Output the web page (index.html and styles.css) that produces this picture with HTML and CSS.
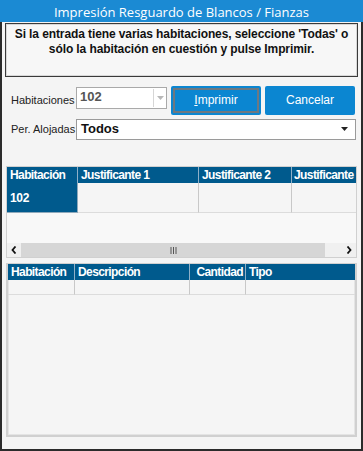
FILE: index.html
```html
<!DOCTYPE html>
<html lang="es">
<head>
    <meta charset="UTF-8">
    <title>Impresión Resguardo de Blancos / Fianzas</title>
    <link rel="stylesheet" href="styles.css">
</head>
<body>
    <div class="ventana">
        <div class="titulo">Impresión Resguardo de Blancos / Fianzas</div>

        <div class="mensaje">
            Si la entrada tiene varias habitaciones, seleccione 'Todas' o<br>
            sólo la habitación en cuestión y pulse Imprimir.
        </div>

        <div class="fila fila-hab">
            <span class="etiqueta">Habitaciones</span>
            <div class="combo combo-hab">
                <span class="valor">102</span>
                <span class="flecha-gris">
                    <svg width="7" height="4" viewBox="0 0 7 4"><path d="M0 0h7L3.5 4z" fill="#b8b8b8"/></svg>
                </span>
            </div>
            <button class="boton boton-foco"><span><u>I</u>mprimir</span></button>
            <button class="boton">Cancelar</button>
        </div>

        <div class="fila fila-per">
            <span class="etiqueta">Per. Alojadas</span>
            <div class="combo combo-per">
                <span class="valor">Todos</span>
                <svg width="7" height="4" viewBox="0 0 7 4"><path d="M0 0h7L3.5 4z" fill="#222"/></svg>
            </div>
        </div>

        <div class="rejilla rejilla-1">
            <div class="cab">
                <div class="c c1">Habitación</div>
                <div class="c c2">Justificante 1</div>
                <div class="c c3">Justificante 2</div>
                <div class="c c4">Justificante</div>
            </div>
            <div class="fila-datos">
                <div class="c c1 sel">102</div>
                <div class="c c2"></div>
                <div class="c c3"></div>
                <div class="c c4"></div>
            </div>
            <div class="vacio"></div>
            <div class="scroll">
                <span class="sc-flecha">
                    <svg width="6" height="8" viewBox="0 0 6 8"><path d="M4.5 0.5L1.5 4l3 3.5" fill="none" stroke="#111" stroke-width="1.8"/></svg>
                </span>
                <span class="sc-barra">
                    <svg width="7" height="7" viewBox="0 0 7 7"><path d="M1 0v7M3.5 0v7M6 0v7" stroke="#555" stroke-width="1"/></svg>
                </span>
                <span class="sc-flecha">
                    <svg width="6" height="8" viewBox="0 0 6 8"><path d="M1.5 0.5L4.5 4l-3 3.5" fill="none" stroke="#111" stroke-width="1.8"/></svg>
                </span>
            </div>
        </div>

        <div class="rejilla rejilla-2">
            <div class="cab">
                <div class="c d1">Habitación</div>
                <div class="c d2">Descripción</div>
                <div class="c d3">Cantidad</div>
                <div class="c d4">Tipo</div>
            </div>
            <div class="fila-datos fila-nueva">
                <div class="c d1"></div>
                <div class="c d2"></div>
                <div class="c d3"></div>
                <div class="c d4"></div>
            </div>
        </div>
    </div>
</body>
</html>
```

FILE: styles.css
```css
body {
    margin: 0;
    font-family: 'Liberation Sans', Arial, sans-serif;
    background: #f4f4f4;
}

.ventana {
    width: 363px;
    height: 451px;
    box-sizing: border-box;
    border: 2px solid #2b2b2b;
    border-top: none;
    background: #f4f4f4;
    display: flex;
    flex-direction: column;
}

.titulo {
    height: 22px;
    margin: 0 -2px;
    background: #1b8ad3;
    color: white;
    font-family: 'Open Sans', 'Noto Sans', sans-serif;
    font-size: 13px;
    line-height: 24px;
    text-align: center;
}

.mensaje {
    margin: 1px 3px 0 3px;
    height: 54px;
    box-sizing: border-box;
    border: 1px solid #3a3a3a;
    box-shadow: inset 0 0 0 1px #d8d8d8;
    background: #f7f7f7;
    font-size: 12px;
    font-weight: bold;
    color: #111;
    text-align: center;
    line-height: 15px;
    padding-top: 3px;
    letter-spacing: -0.1px;
}

.fila {
    display: flex;
    align-items: center;
}

.etiqueta {
    width: 64px;
    margin-left: 9px;
    font-size: 11px;
    color: #222;
    white-space: nowrap;
}

.fila-hab {
    margin-top: 8px;
    height: 30px;
}

.fila-per {
    margin-top: 3px;
    height: 22px;
}

.combo {
    height: 21px;
    box-sizing: border-box;
    background: white;
    border: 1px solid #a9a9a9;
    display: flex;
    align-items: center;
    font-size: 13px;
    font-weight: bold;
    color: #222;
}

.combo-hab {
    width: 91px;
    margin-left: 1px;
    align-self: flex-start;
    margin-top: 2px;
    height: 22px;
    color: #555;
}

.combo-hab .valor {
    flex: 1;
    padding-left: 3px;
    margin-top: -3px;
}

.flecha-gris {
    width: 12px;
    height: 18px;
    border-left: 1px solid #d6d6d6;
    display: flex;
    align-items: center;
    justify-content: center;
}

.combo-per {
    width: 280px;
    margin-left: 1px;
    padding-right: 7px;
    border-color: #9a9a9a;
}

.combo-per .valor {
    flex: 1;
    padding-left: 4px;
    color: #111;
    margin-top: -2px;
}

.boton {
    width: 90px;
    height: 29px;
    margin-left: 4px;
    border: none;
    border-radius: 2px;
    background: #0b86d1;
    color: white;
    font-family: 'Liberation Sans', Arial, sans-serif;
    font-size: 12px;
    padding: 0;
}

.boton-foco {
    padding: 2px;
}

.boton-foco span {
    display: flex;
    align-items: center;
    justify-content: center;
    height: 100%;
    box-sizing: border-box;
    border: 2px solid #6e7880;
}

.rejilla {
    margin: 0 4px;
    border: 1px solid #d0d0d0;
    background: #f5f5f5;
    box-sizing: border-box;
}

.rejilla-1 {
    margin-top: 26px;
    height: 92px;
    display: flex;
    flex-direction: column;
}

.rejilla-2 {
    margin-top: 5px;
    height: 174px;
    border-width: 1px 2px 2px 2px;
    box-shadow: inset 0 0 0 1px #e4e4e4;
}

.cab {
    display: flex;
    background: #005a8d;
    color: white;
    font-size: 12px;
    letter-spacing: -0.6px;
    font-weight: bold;
    height: 16px;
    line-height: 16px;
}

.cab .c {
    border-right: 1px solid #8fb0c8;
    padding-left: 3px;
    box-sizing: border-box;
    white-space: nowrap;
    overflow: hidden;
}

.c1 { width: 71px; }
.c2 { width: 121px; }
.c3 { width: 93px; }
.c4 { flex: 1; }

.cab .c4 {
    padding-left: 2px;
}

.d1 { width: 67px; }
.d2 { width: 115px; }
.d3 { width: 56px; text-align: right; padding-right: 2px; }
.d4 { flex: 1; }

.cab .d3 {
    padding-left: 0;
}

.cab .c4, .cab .d4 {
    border-right: none;
}

.fila-datos {
    display: flex;
    height: 30px;
    font-size: 12px;
    letter-spacing: -0.3px;
    font-weight: bold;
}

.fila-datos .c {
    border-right: 1px solid #c8c8c8;
    border-bottom: 1px solid #dcdcdc;
    box-sizing: border-box;
}

.fila-datos .c4, .fila-datos .d4 {
    border-right: none;
}

.sel {
    background: #005a8d;
    color: white;
    display: flex;
    align-items: center;
    padding-left: 3px;
    border-color: #8fa9bb !important;
}

.fila-nueva {
    height: 15px;
}

.vacio {
    flex: 1;
    background: #f8f8f8;
}

.scroll {
    height: 14px;
    display: flex;
    align-items: center;
    background: #f0f0f0;
}

.sc-flecha {
    width: 14px;
    height: 14px;
    display: flex;
    align-items: center;
    justify-content: center;
}

.sc-barra {
    flex: 1;
    height: 14px;
    margin-right: 17px;
    background: #d6d6d6;
    display: flex;
    align-items: center;
    justify-content: center;
}
```
